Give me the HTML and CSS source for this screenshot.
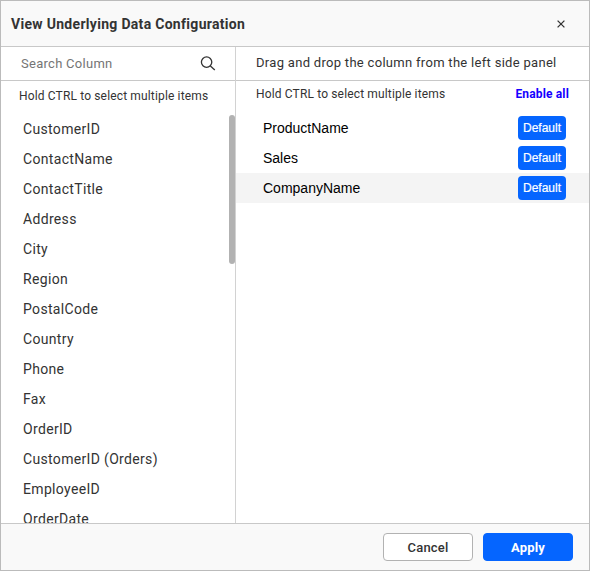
FILE: index.html
```html
<!DOCTYPE html>
<html lang="en">
<head>
<meta charset="utf-8">
<title>View Underlying Data Configuration</title>
<link rel="stylesheet" href="styles.css">
</head>
<body>
<div class="dialog">
  <header class="header">
    <h1 class="title">View Underlying Data Configuration</h1>
    <svg class="close" width="8" height="8" viewBox="0 0 8 8"><path d="M.6.6 7.4 7.4M7.4.6.6 7.4"/></svg>
  </header>
  <main class="body">
    <section class="source">
      <div class="search">
        <span class="placeholder">Search Column</span>
        <svg class="glass" width="16" height="16" viewBox="0 0 16 16"><circle cx="6.6" cy="6.1" r="5.2"/><path d="M10.4 9.9 14.8 13.9"/></svg>
      </div>
      <p class="hint">Hold CTRL to select multiple items</p>
      <div class="scroller">
        <ul class="columns">
          <li>CustomerID</li>
          <li>ContactName</li>
          <li>ContactTitle</li>
          <li>Address</li>
          <li>City</li>
          <li>Region</li>
          <li>PostalCode</li>
          <li>Country</li>
          <li>Phone</li>
          <li>Fax</li>
          <li>OrderID</li>
          <li>CustomerID (Orders)</li>
          <li>EmployeeID</li>
          <li>OrderDate</li>
        </ul>
        <div class="thumb"></div>
      </div>
    </section>
    <section class="target">
      <div class="instruction">Drag and drop the column from the left side panel</div>
      <div class="bar"><span>Hold CTRL to select multiple items</span><a class="enable">Enable all</a></div>
      <ul class="chosen">
        <li><span>ProductName</span><button class="default">Default</button></li>
        <li><span>Sales</span><button class="default">Default</button></li>
        <li class="active"><span>CompanyName</span><button class="default">Default</button></li>
      </ul>
    </section>
  </main>
  <footer class="footer">
    <button class="btn">Cancel</button>
    <button class="btn primary">Apply</button>
  </footer>
</div>
</body>
</html>
```
FILE: styles.css
```css
* { box-sizing: border-box; }
body { margin: 0; font-family: Roboto, "Liberation Sans", sans-serif; color: #333; }
ul, p, h1 { margin: 0; padding: 0; list-style: none; }
button { font-family: inherit; padding: 0; }

.dialog {
  width: 590px;
  height: 571px;
  border: 1px solid #bbb;
  background: #fff;
  display: flex;
  flex-direction: column;
}
.header {
  height: 46px;
  flex: none;
  display: flex;
  align-items: center;
  justify-content: space-between;
  padding: 0 24px 0 10px;
  background: #f9f9f9;
  border-bottom: 1px solid #c8c8c8;
}
.title { font-size: 14px; line-height: 20px; font-weight: 700; letter-spacing: .3px; padding-top: 1px; }
.close { fill: none; stroke: #333; stroke-width: 1.3; margin-top: 1px; }

.body { flex: 1; min-height: 0; display: flex; }
.source {
  width: 235px;
  flex: none;
  border-right: 1px solid #d2d2d2;
  display: flex;
  flex-direction: column;
}
.search, .instruction {
  height: 34px;
  flex: none;
  display: flex;
  align-items: center;
  border-bottom: 1px solid #c8c8c8;
}
.search { justify-content: space-between; padding: 0 19px 0 20px; }
.placeholder { font-size: 13px; letter-spacing: .28px; color: #757575; }
.glass { fill: none; stroke: #333; stroke-width: 1.3; }
.hint { height: 33px; flex: none; padding-left: 18px; line-height: 31px; font-size: 12px; letter-spacing: .15px; }
.scroller { flex: 1; min-height: 0; display: flex; justify-content: space-between; overflow: hidden; }
.columns li { height: 30px; line-height: 30px; padding-left: 22px; font-size: 14px; letter-spacing: .33px; }
.thumb { width: 6px; height: 149px; margin-top: 1px; border-radius: 3px; background: #b2b2b2; }

.target { flex: 1; }
.instruction { padding: 0 0 2px 20px; font-size: 13px; letter-spacing: .3px; }
.bar { height: 32px; display: flex; justify-content: space-between; padding: 0 20px; line-height: 27px; font-size: 12px; letter-spacing: .15px; }
.enable { color: #1500ff; font-weight: 700; }
.chosen li {
  height: 30px;
  display: flex;
  align-items: center;
  justify-content: space-between;
  padding: 0 23px 0 27px;
  font: 14px "Liberation Sans", sans-serif;
  color: #000;
}
.chosen .active { background: #f4f4f4; }
.default {
  width: 48px;
  height: 24px;
  border: 0;
  border-radius: 4px;
  background: #0565ff;
  color: #fff;
  font-size: 12px;
  -webkit-text-stroke: .2px #fff;
}

.footer {
  height: 47px;
  flex: none;
  display: flex;
  justify-content: flex-end;
  align-items: center;
  gap: 10px;
  padding: 0 16px 0 0;
  background: #f9f9f9;
  border-top: 1px solid #c8c8c8;
}
.btn {
  width: 90px;
  height: 28px;
  border: 1px solid #b2b2b2;
  border-radius: 4px;
  background: #fff;
  color: #333;
  font-size: 13px;
  font-weight: 500;
  letter-spacing: .2px;
}
.primary { background: #0565ff; border-color: #0565ff; color: #fff; font-weight: 700; }
```
